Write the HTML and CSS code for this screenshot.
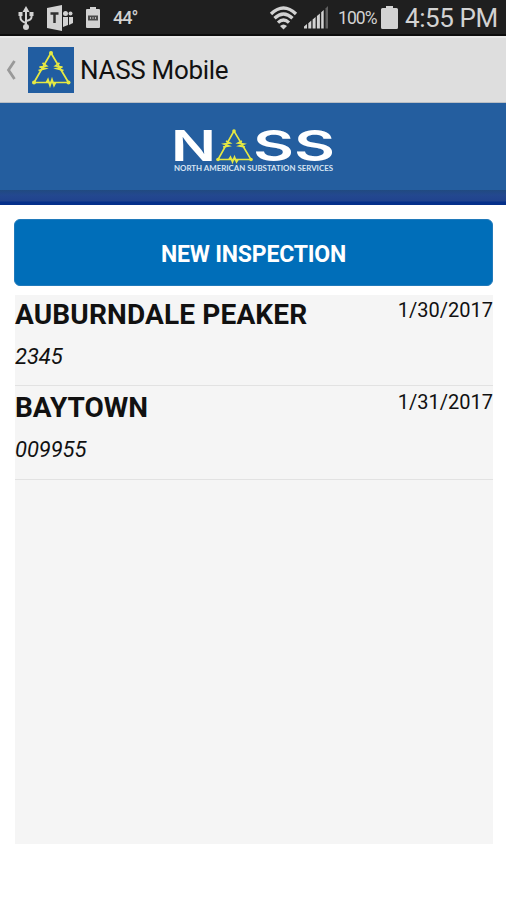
FILE: index.html
```
<!doctype html>
<html lang="en">
<head>
    <meta charset="UTF-8">
    <meta name="viewport" content="width=device-width, initial-scale=1.0">
    <title>NASS Mobile</title>
    <link rel="stylesheet" href="styles.css">
</head>
<body>
<!-- status bar -->
<div class="status">
    <svg class="usb" width="18" height="26" viewBox="0 0 18 26">
        <path d="M9 5v16M3.500 9v4q0 3 5.500 5M14.500 9v3q0 3-5.500 4" fill="none" stroke="#d2d2d2" stroke-width="2"/>
        <path d="M9 1l3.500 6h-7zM1.500 7h4v4h-4zM12.500 7h4v4h-4z"/>
        <circle cx="9" cy="22" r="3"/>
    </svg>
    <svg class="teams" width="28" height="26" viewBox="0 0 28 26">
        <path d="M1 3l15-3v26L1 23z"/>
        <path d="M4.500 8.500h8M8.500 8v10" fill="none" stroke="#303030" stroke-width="2.500"/>
        <circle cx="19.500" cy="8.500" r="2.500"/>
        <circle cx="24.500" cy="8.500" r="2"/>
        <path d="M17 12h5v8l-5 2zM23 12h4v6l-4 2z"/>
    </svg>
    <svg class="mini-battery" width="14" height="21" viewBox="0 0 14 21">
        <path d="M4 0h6v2h3q1 0 1 1v17q0 1-1 1H1q-1 0-1-1V3q0-1 1-1h3z"/>
        <path d="M2 8.500h10v5H2z" fill="#4b4b4b"/>
        <path d="M4 11h1M6.500 11h1M9 11h1" stroke="#b5b5b5" stroke-width="2"/>
    </svg>
    <span class="temp">44°</span>
    <svg class="wifi" width="27" height="24" viewBox="0 0 27 24">
        <path d="M1 8Q13.500-4 26 8M4.500 12.300q9-8.500 18 0M8 16.600q5.500-5 11 0" fill="none" stroke="#d2d2d2" stroke-width="3.300"/>
        <path d="M13.500 23.500L10 20q3.500-3 7 0z"/>
    </svg>
    <svg class="signal" width="25" height="23" viewBox="0 0 25 23">
        <path d="M0 22.500v-2l3-2.500v4.500zM4.300 22.500v-5.300l3-2.600v7.900zM8.600 22.500v-9l3-2.500v11.500zM12.900 22.500V10l3-2.500v15zM17.200 22.500V6.300l2.500-2.200v18.400z"/>
        <path d="M21.500 22.500V2.500L24 0v22.500z" fill="#606060"/>
    </svg>
    <span class="percent">100%</span>
    <svg class="battery" width="17" height="23" viewBox="0 0 17 23">
        <path d="M5 0h7v2h3.500Q17 2 17 3.500v18q0 1.500-1.500 1.500h-14Q0 23 0 21.500v-18Q0 2 1.500 2H5z"/>
    </svg>
    <span class="clock">4:55 PM</span>
</div>

<!-- title bar -->
<div class="title-bar">
    <svg class="back" width="10" height="20" viewBox="0 0 10 20">
        <path d="M8.500 1L2.500 10l6 9" fill="none" stroke="#999" stroke-width="2.800"/>
    </svg>
    <svg class="app-icon" width="46" height="46" viewBox="0 0 46 46">
        <rect width="46" height="46" fill="#215da1"/>
        <g fill="none" stroke="#e6e943" stroke-width="1.700">
            <path d="M23 6L6 35.500h34.500z"/>
            <path d="M18.500 35.500l1.500-3 2 6 2-6 2 6 1.500-3M10.500 23.500l7-2-6-1.500 7-1-4-3M35.500 23.500l-7-2 6-1.500-7-1 4-3"/>
        </g>
        <g fill="#e6e943">
            <circle cx="23" cy="6" r="2"/>
            <circle cx="6" cy="35.500" r="2"/>
            <circle cx="40.500" cy="35.500" r="2"/>
        </g>
    </svg>
    <h1>NASS Mobile</h1>
</div>

<!-- company banner -->
<div class="banner">
    <svg class="logo" width="164" height="48" viewBox="0 0 164 48">
        <g class="brand">
            <text x="0" y="33" textLength="45" lengthAdjust="spacingAndGlyphs">N</text>
            <text x="82" y="33" textLength="82" lengthAdjust="spacingAndGlyphs">SS</text>
        </g>
        <g fill="none" stroke="#e6e943" stroke-width="1.600">
            <path d="M63 3L47 31.500h33z"/>
            <path d="M58 31.500l1.500-2.500 2 5 2-5 2 5 1.500-2.500M52 19l6-1-5-2 6-1-4-2M74 19l-6-1 5-2-6-1 4-2"/>
        </g>
        <g fill="#e6e943">
            <circle cx="63" cy="3" r="1.800"/>
            <circle cx="47" cy="31.500" r="1.800"/>
            <circle cx="80" cy="31.500" r="1.800"/>
        </g>
        <text class="tagline" x="3" y="43" textLength="159" lengthAdjust="spacingAndGlyphs">NORTH AMERICAN SUBSTATION SERVICES</text>
    </svg>
</div>

<div class="content">
    <button class="new-btn">NEW INSPECTION</button>
    <ul class="list">
        <li>
            <div class="info">
                <h2 class="wide">AUBURNDALE PEAKER</h2>
                <p>2345</p>
            </div>
            <div class="date">1/30/2017</div>
        </li>
        <li>
            <div class="info">
                <h2>BAYTOWN</h2>
                <p>009955</p>
            </div>
            <div class="date">1/31/2017</div>
        </li>
    </ul>
</div>
</body>
</html>
```
FILE: styles.css
```
*{
    padding: 0;
    margin: 0;
    box-sizing: border-box;
}
body{
    background: #fff;
    color: #111;
    font-family: Roboto, "Liberation Sans", sans-serif;
}
svg{
    display: block;
    flex: none;
    overflow: visible;
}

/* status bar */
.status{
    display: flex;
    align-items: center;
    height: 36px;
    padding: 1px 0 0 17px;
    background: #1f1f1f;
    border-bottom: 2px solid #0c0c0c;
    color: #d2d2d2;
    fill: #d2d2d2;
    white-space: nowrap;
}
.teams{
    margin-left: 11px;
}
.mini-battery{
    margin-left: 12px;
}
.temp{
    width: 26px;
    margin-left: 13px;
    font-size: 18px;
    font-weight: 500;
    letter-spacing: -1px;
}
.wifi{
    margin-left: 131px;
}
.signal{
    margin-left: 7px;
}
.percent{
    width: 40px;
    margin-left: 9px;
    font-size: 17.5px;
    letter-spacing: -.9px;
}
.battery{
    margin-left: 3px;
}
.clock{
    margin-left: 7px;
    font-size: 26px;
    letter-spacing: -.4px;
}

/* title bar */
.title-bar{
    display: flex;
    align-items: center;
    height: 67px;
    padding-left: 6px;
    background: #dedede;
    border-top: 2px solid #e9e9e9;
    border-bottom: 1px solid #b9bec4;
}
.app-icon{
    margin-left: 12px;
}
.title-bar h1{
    margin-left: 6px;
    font-size: 26px;
    font-weight: 400;
    letter-spacing: -.3px;
}

/* banner */
.banner{
    display: flex;
    justify-content: center;
    height: 102px;
    padding-top: 25px;
    background: linear-gradient(#245e9f 87px, #204a80 87px, #23488f 92px, #20438e 98px, #05308a 99px);
}
.brand{
    fill: #fff;
    font-family: Inter, sans-serif;
    font-size: 43px;
    font-weight: 600;
}
.tagline{
    fill: #d8e4f2;
    font-family: Lato, sans-serif;
    font-size: 7.5px;
    font-weight: 700;
}

/* inspections */
.content{
    padding: 14px 13px 0 14px;
}
.new-btn{
    display: block;
    width: 100%;
    height: 67px;
    padding-top: 3px;
    border: 1px solid #207abb;
    border-radius: 6px;
    background: #006eb9;
    color: #fff;
    font: 700 23px Roboto, sans-serif;
    letter-spacing: -.2px;
}
.list{
    height: 549px;
    margin: 9px 0 0 1px;
    background: #f5f5f5;
    list-style: none;
}
.list li{
    display: flex;
    justify-content: space-between;
    height: 91px;
    border-bottom: 1px solid #e2e2e2;
}
.list li + li{
    height: 94px;
    padding-top: 1px;
}
.list h2{
    padding-top: 5px;
    font-size: 28px;
    line-height: 32px;
}
.list h2.wide{
    padding-top: 4px;
    letter-spacing: .15px;
}
.list p{
    margin-top: 13px;
    font-size: 22px;
    font-style: italic;
    line-height: 26px;
    letter-spacing: -.1px;
}
.date{
    padding-top: 2px;
    font-size: 20px;
    line-height: 26px;
}
```
